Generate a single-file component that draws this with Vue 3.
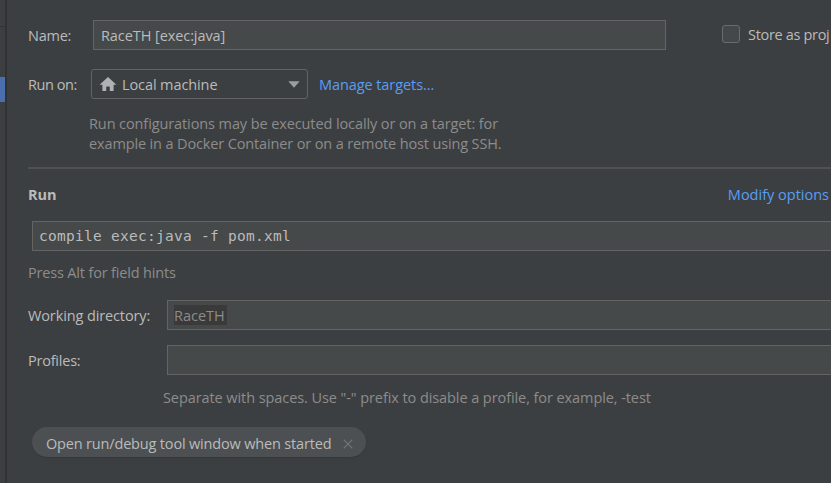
<script setup>
const chips = ['Open run/debug tool window when started']
</script>

<template>
  <div class="dialog">
    <aside class="side">
      <div class="side-head"></div>
      <div class="side-selected"></div>
    </aside>
    <main class="panel">
      <div class="row name-row">
        <label class="t-name">Name:</label>
        <div class="field name-field"><span class="t-value">RaceTH [exec:java]</span></div>
        <div class="store"><i class="checkbox"></i><span class="t-store">Store as proj</span></div>
      </div>
      <div class="row target-row">
        <label class="t-runon">Run on:</label>
        <div class="combo">
          <svg class="home" width="18" height="16" viewBox="0 0 18 16">
            <path d="M9 1 17.4 8.8H14.6V15H10.8V11.2Q10.8 10.4 10 10.4H8Q7.2 10.4 7.2 11.2V15H3.4V8.8H.6Z" fill="#afb1b3" />
          </svg>
          <span class="t-local">Local machine</span>
          <svg class="arrow" width="12" height="7" viewBox="0 0 12 7"><path d="M.3.3H11.7L6 6.7Z" fill="#9b9d9e" /></svg>
        </div>
        <a class="link t-manage">Manage targets...</a>
      </div>
      <p class="hint target-hint">
        <span class="t-hint1">Run configurations may be executed locally or on a target: for</span><br />
        <span class="t-hint2">example in a Docker Container or on a remote host using SSH.</span>
      </p>
      <hr />
      <div class="row run-row">
        <b class="t-run">Run</b>
        <a class="link t-modify">Modify options</a>
      </div>
      <div class="field command">compile exec:java -f pom.xml</div>
      <p class="hint t-press">Press Alt for field hints</p>
      <div class="row dir-row">
        <label class="t-dir">Working directory:</label>
        <div class="field wide"><span class="macro t-macro">RaceTH</span></div>
      </div>
      <div class="row profile-row">
        <label class="t-profiles">Profiles:</label>
        <div class="field wide"></div>
      </div>
      <p class="hint profile-hint t-sep">Separate with spaces. Use "-" prefix to disable a profile, for example, -test</p>
      <div v-for="chip in chips" :key="chip" class="chip">
        <span class="t-chip">{{ chip }}</span>
        <svg width="10" height="10" viewBox="0 0 10 10"><path d="M.7.7 9.3 9.3M9.3.7.7 9.3" stroke="#737678" stroke-width="1.2" /></svg>
      </div>
    </main>
  </div>
</template>

<style>
body { margin: 0; overflow: hidden; background: #3c3f41; }
</style>

<style scoped>
* { box-sizing: border-box; }
.dialog {
  display: flex; width: 831px; height: 483px; overflow: hidden;
  background: #3c3f41; color: #bbb;
  font: 14.5px/20px "Open Sans", "Noto Sans", sans-serif; white-space: nowrap;
}
.side { width: 7px; flex: none; border-right: 2px solid #323232; }
.side-head { height: 27px; border-bottom: 1px solid #323232; }
.side-selected { height: 25px; margin-top: 50px; background: #4b6eaf; }
.panel { flex: 1; min-width: 0; padding: 20px 0 0 21px; overflow: hidden; }
.row { display: flex; align-items: center; height: 30px; }
label { flex: none; padding-top: 2px; }
.field { height: 30px; border: 1px solid #646464; background: #45494a; display: flex; align-items: center; padding-left: 7px; }
.name-row label { width: 65px; letter-spacing: -.25px; }
.name-field { width: 573px; flex: none; padding-top: 2px; letter-spacing: -.08px; }
.store { display: flex; align-items: center; margin-left: 56px; height: 28px; align-self: flex-start; }
.checkbox { width: 18px; height: 18px; border: 1px solid #6b6b6b; border-radius: 3px; background: #43494a; margin-right: 8px; flex: none; }
.t-store { padding-top: 2px; letter-spacing: -.32px; }
.target-row { margin-top: 19px; }
.target-row label { width: 63px; letter-spacing: -.45px; }
.combo { width: 217px; height: 30px; border: 1px solid #646464; border-radius: 3px; display: flex; align-items: center; flex: none; padding: 0 7px; }
.home { margin-right: 5px; flex: none; }
.t-local { padding-top: 2px; letter-spacing: -.1px; }
.arrow { margin-left: auto; }
.link { color: #589df6; }
.t-manage { margin-left: 11px; padding-top: 2px; letter-spacing: -.08px; }
p { margin: 0; }
.hint { color: #8c8c8c; }
.target-hint { margin: 15px 0 0 61px; }
.t-hint1 { letter-spacing: -.1px; }
.t-hint2 { letter-spacing: -.135px; }
hr { height: 2px; border: 0; margin: 13px 0 0; background: #515151; }
.run-row { margin-top: 11px; justify-content: space-between; padding-right: 2px; }
.command { margin: 11px 0 0 4px; border-right: 0; padding-left: 6px; font-family: "DejaVu Sans Mono", monospace; font-size: 14.5px; letter-spacing: .27px; }
.t-press { margin-top: 12px; letter-spacing: -.17px; }
.dir-row { margin-top: 17px; }
.dir-row label, .profile-row label { width: 139px; }
.t-dir { letter-spacing: -.12px; }
.t-profiles { letter-spacing: -.22px; }
.wide { flex: 1; border-right: 0; padding-left: 6px; }
.macro { width: 53px; height: 20px; line-height: 21px; background: #3a3a3a; color: #8c8c8c; }
.profile-row { margin-top: 15px; }
.profile-hint { margin: 13px 0 0 135px; letter-spacing: -.08px; }
.chip { display: flex; align-items: center; width: 334px; height: 30px; margin: 19px 0 0 4px; padding: 3px 0 0 14px; border-radius: 15px; background: #4c5052; box-shadow: 0 1px 1px #35383a; }
.t-chip { width: 297px; letter-spacing: -.17px; }
</style>
